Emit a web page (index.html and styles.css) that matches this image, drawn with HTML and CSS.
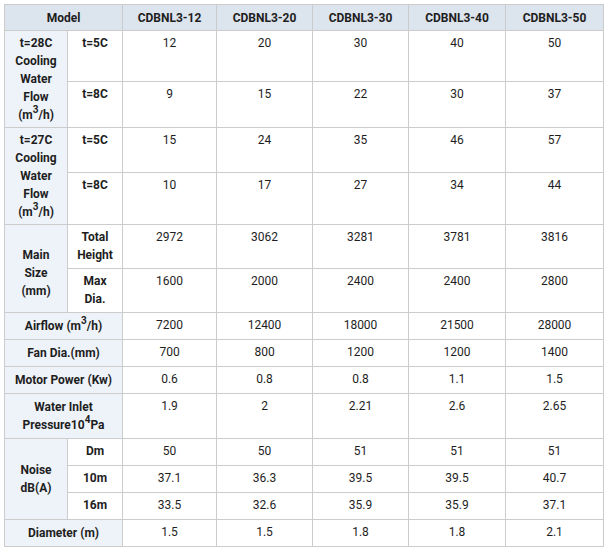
FILE: index.html
```html
<!DOCTYPE html>
<html>
<head>
<meta charset="utf-8">
<link rel="stylesheet" href="styles.css">
</head>
<body>
<div class="wrap">
<table class="spec">
  <colgroup>
    <col class="c0"><col class="c1"><col class="c2"><col class="c3"><col class="c4"><col class="c5"><col class="c6">
  </colgroup>
  <thead>
    <tr class="h26">
      <th colspan="2">Model</th>
      <th>CDBNL3-12</th><th>CDBNL3-20</th><th>CDBNL3-30</th><th>CDBNL3-40</th><th>CDBNL3-50</th>
    </tr>
  </thead>
  <tbody>
    <tr class="h50">
      <th rowspan="2" class="lbl">t=28C<br>Cooling<br>Water<br>Flow<br>(m<sup>3</sup>/h)</th>
      <td class="sub">t=5C</td><td>12</td><td>20</td><td>30</td><td>40</td><td>50</td>
    </tr>
    <tr class="h46">
      <td class="sub">t=8C</td><td>9</td><td>15</td><td>22</td><td>30</td><td>37</td>
    </tr>
    <tr class="h45">
      <th rowspan="2" class="lbl">t=27C<br>Cooling<br>Water<br>Flow<br>(m<sup>3</sup>/h)</th>
      <td class="sub">t=5C</td><td>15</td><td>24</td><td>35</td><td>46</td><td>57</td>
    </tr>
    <tr class="h52">
      <td class="sub">t=8C</td><td>10</td><td>17</td><td>27</td><td>34</td><td>44</td>
    </tr>
    <tr class="h44">
      <th rowspan="2" class="lbl shift-lg">Main<br>Size<br>(mm)</th>
      <td class="sub">Total<br>Height</td><td>2972</td><td>3062</td><td>3281</td><td>3781</td><td>3816</td>
    </tr>
    <tr class="h44">
      <td class="sub">Max<br>Dia.</td><td>1600</td><td>2000</td><td>2400</td><td>2400</td><td>2800</td>
    </tr>
    <tr class="h27">
      <th colspan="2" class="lbl">Airflow (m<sup>3</sup>/h)</th><td>7200</td><td>12400</td><td>18000</td><td>21500</td><td>28000</td>
    </tr>
    <tr class="h27">
      <th colspan="2" class="lbl">Fan Dia.(mm)</th><td>700</td><td>800</td><td>1200</td><td>1200</td><td>1400</td>
    </tr>
    <tr class="h27">
      <th colspan="2" class="lbl">Motor Power (Kw)</th><td>0.6</td><td>0.8</td><td>0.8</td><td>1.1</td><td>1.5</td>
    </tr>
    <tr class="h45">
      <th colspan="2" class="lbl">Water Inlet<br>Pressure10<sup>4</sup>Pa</th><td>1.9</td><td>2</td><td>2.21</td><td>2.6</td><td>2.65</td>
    </tr>
    <tr class="h27">
      <th rowspan="3" class="lbl">Noise<br>dB(A)</th>
      <td class="sub">Dm</td><td>50</td><td>50</td><td>51</td><td>51</td><td>51</td>
    </tr>
    <tr class="h27">
      <td class="sub">10m</td><td>37.1</td><td>36.3</td><td>39.5</td><td>39.5</td><td>40.7</td>
    </tr>
    <tr class="h27">
      <td class="sub">16m</td><td>33.5</td><td>32.6</td><td>35.9</td><td>35.9</td><td>37.1</td>
    </tr>
    <tr class="h27">
      <th colspan="2" class="lbl">Diameter (m)</th><td>1.5</td><td>1.5</td><td>1.8</td><td>1.8</td><td>2.1</td>
    </tr>
  </tbody>
</table>
</div>
</body>
</html>
```
FILE: styles.css
```css
html, body {
  margin: 0;
  padding: 0;
  background: #fff;
}
.wrap {
  padding: 4px 0 0 4px;
}
.spec {
  border-collapse: collapse;
  table-layout: fixed;
  width: 600px;
  font-family: Roboto, "Liberation Sans", Arial, sans-serif;
  font-size: 12px;
  line-height: 18px;
  color: #1e1e1e;
}
.c0 { width: 63px; }
.c1 { width: 55px; }
.c2 { width: 94px; }
.c3 { width: 96px; }
.c4 { width: 96px; }
.c5 { width: 97px; }
.c6 { width: 98px; }
.spec th, .spec td {
  border: 1px solid #cccccc;
  text-align: center;
  padding: 3px 2px;
  vertical-align: top;
}
.spec thead th {
  background: #dce4ee;
  font-weight: 700;
  vertical-align: middle;
}
.spec th.lbl {
  background: #eef3f9;
  font-weight: 700;
  vertical-align: middle;
}
.spec th.shift-lg { padding-top: 12px; }
.spec td.sub {
  font-weight: 700;
}
.spec sup {
  font-size: 10px;
  line-height: 0;
  vertical-align: 6px;
}
.h26 { height: 26px; }
.h27 { height: 27px; }
.h44 { height: 44px; }
.h45 { height: 45px; }
.h46 { height: 46px; }
.h50 { height: 50px; }
.h52 { height: 52px; }
```
